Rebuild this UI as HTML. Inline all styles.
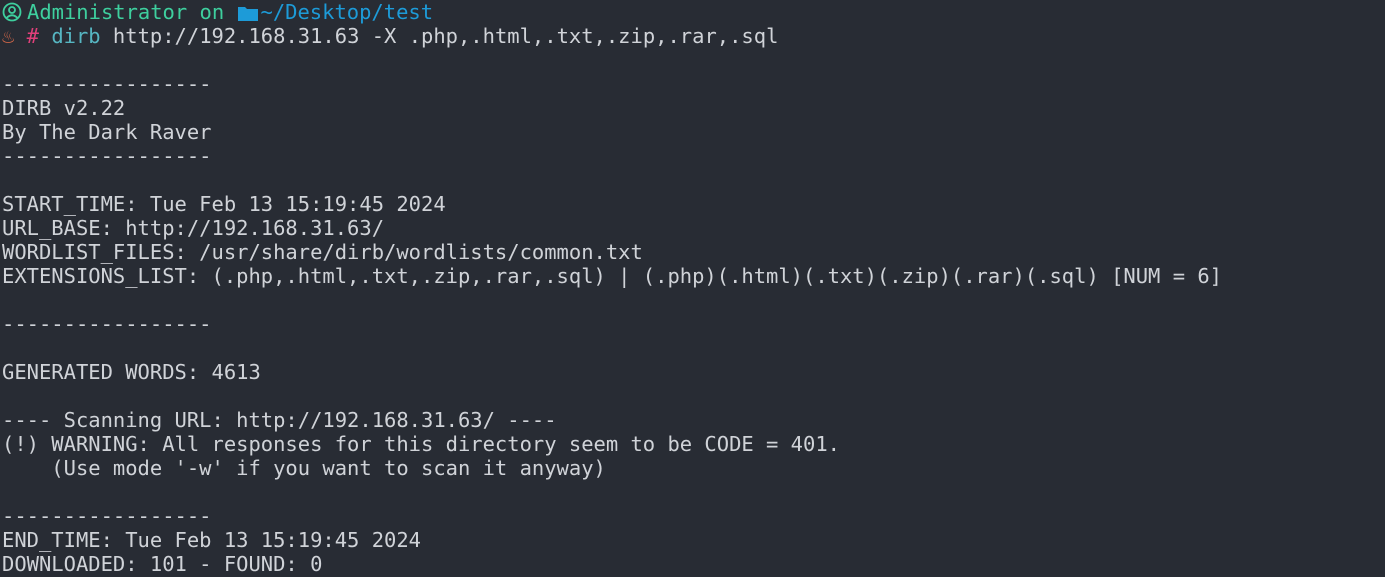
<!DOCTYPE html>
<html><head><meta charset="utf-8"><style>
html,body{margin:0;padding:0;background:#282c34;width:1385px;height:577px;overflow:hidden}
pre{margin:0;padding:0 0 0 2px;font-family:"DejaVu Sans Mono","Liberation Mono",monospace;font-size:20.48px;line-height:24px;color:#d0d3d8;white-space:pre}
.g{color:#3ecf9e}.b{color:#1d9bd8}.p{color:#e0407a}.c{color:#56b6c2}.o{color:#e06c4a}
svg{vertical-align:-3px}
</style></head><body><pre><svg width="22" height="20" viewBox="0 0 22 20" style="margin-right:3px"><circle cx="10" cy="10" r="8.5" fill="none" stroke="#3ecf9e" stroke-width="1.8"/><circle cx="10" cy="8" r="3" fill="none" stroke="#3ecf9e" stroke-width="1.8"/><path d="M4.5 16 Q10 10.5 15.5 16" fill="none" stroke="#3ecf9e" stroke-width="1.8"/></svg><span class="g">Administrator</span> <span class="g">on</span> <svg width="22" height="18" viewBox="0 0 22 18" style="margin-right:2px"><path d="M1 3 h7 l2 2 h11 v12 h-20z" fill="#1d9bd8"/></svg><span class="b">~/Desktop/test</span>
<span class="o">♨</span> <span class="p">#</span> <span class="c">dirb</span> http://192.168.31.63 -X .php,.html,.txt,.zip,.rar,.sql

-----------------
DIRB v2.22    
By The Dark Raver
-----------------

START_TIME: Tue Feb 13 15:19:45 2024
URL_BASE: http://192.168.31.63/
WORDLIST_FILES: /usr/share/dirb/wordlists/common.txt
EXTENSIONS_LIST: (.php,.html,.txt,.zip,.rar,.sql) | (.php)(.html)(.txt)(.zip)(.rar)(.sql) [NUM = 6]

-----------------

GENERATED WORDS: 4613

---- Scanning URL: http://192.168.31.63/ ----
(!) WARNING: All responses for this directory seem to be CODE = 401.
    (Use mode '-w' if you want to scan it anyway)

-----------------
END_TIME: Tue Feb 13 15:19:45 2024
DOWNLOADED: 101 - FOUND: 0</pre></body></html>
